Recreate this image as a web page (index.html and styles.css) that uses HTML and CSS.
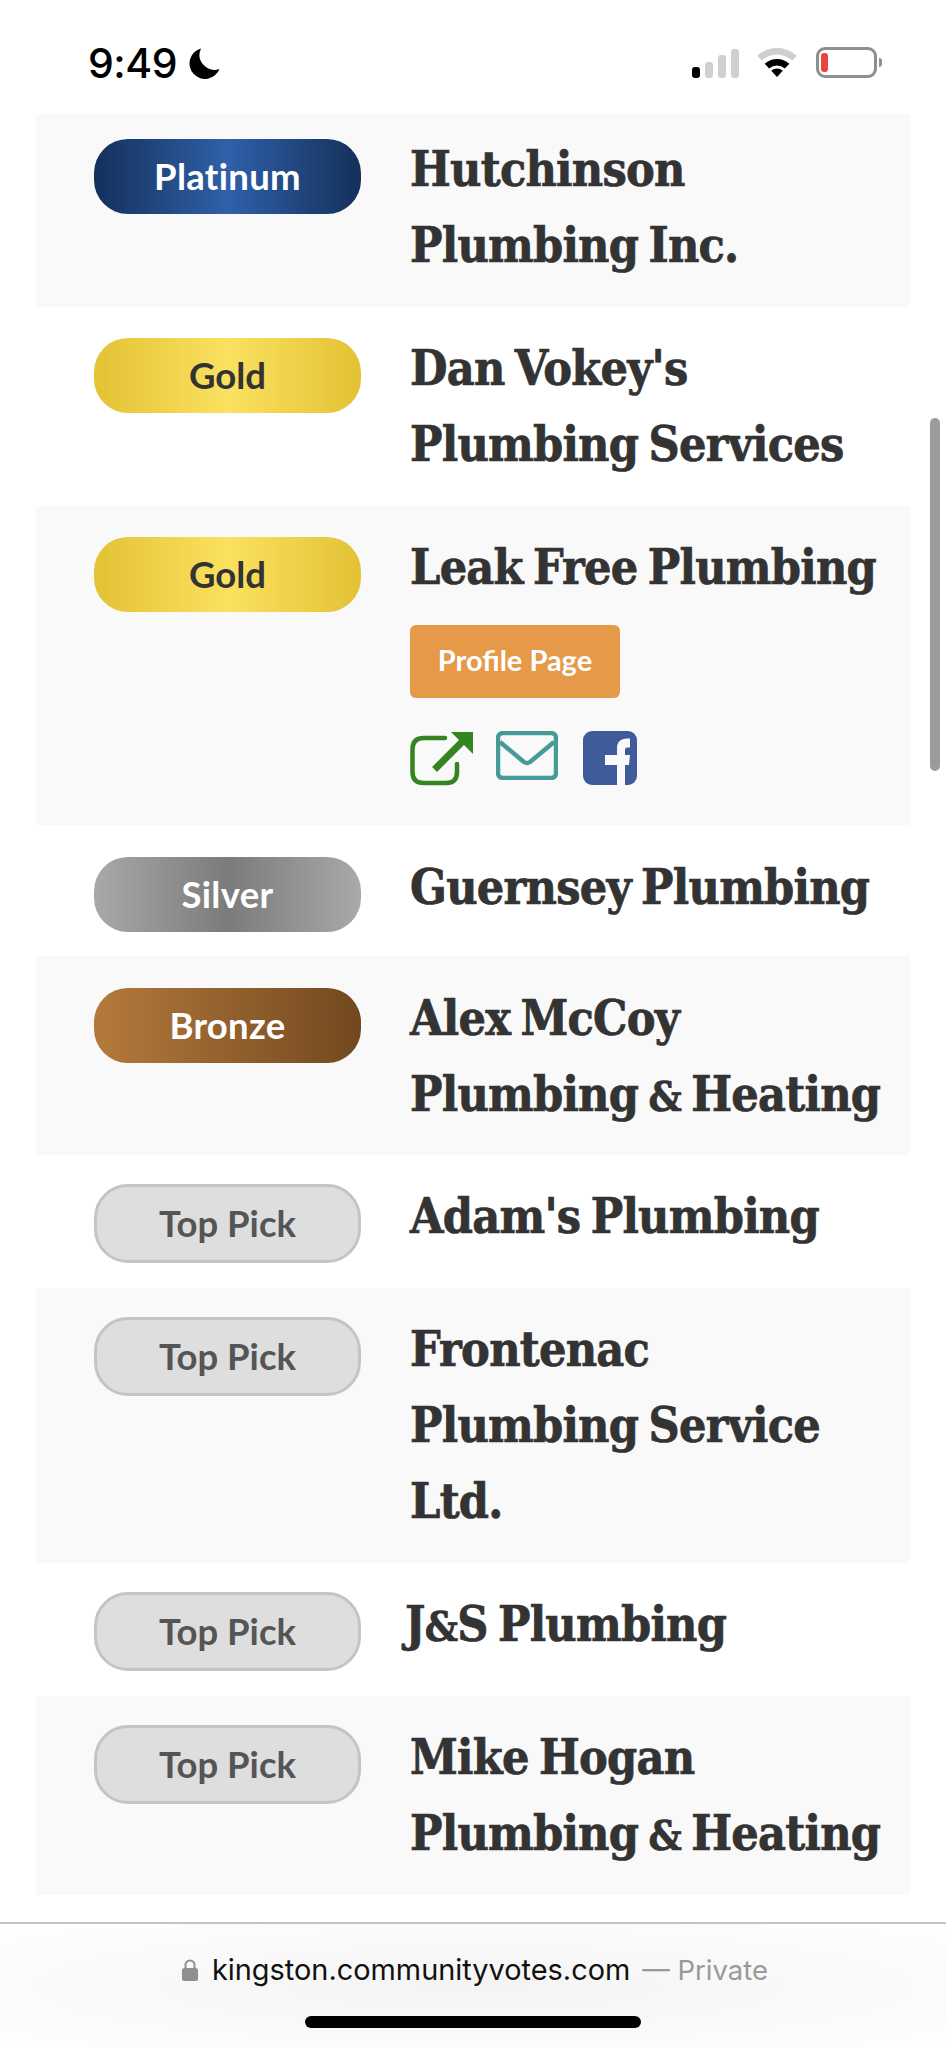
FILE: index.html
```html
<!doctype html>
<html lang="en">
<head>
<meta charset="utf-8">
<title>Plumbing · Kingston Community Votes</title>
<meta name="viewport" content="width=device-width,initial-scale=1">
<link rel="stylesheet" href="styles.css">
</head>
<body>
<div class="phone">
  <div class="status">
    <div class="status-left">
      <span class="clock">9:49</span>
      <svg class="moon" viewBox="0 0 31 31"><path d="M12 .5A15.5 15.5 0 1 0 30.5 21 15 15 0 0 1 12 .5z"/></svg>
    </div>
    <div class="status-right">
      <div class="signal"><i class="on"></i><i></i><i></i><i></i></div>
      <svg class="wifi" viewBox="0 0 40 30">
        <path fill="#cfcfcf" d="M.2 7.8A29 29 0 0 1 39.8 7.8L35.3 12.6A22.5 22.5 0 0 0 4.7 12.6z"/>
        <path d="M7.7 15.8A18 18 0 0 1 32.3 15.8L27.8 20.6A11.5 11.5 0 0 0 12.2 20.6z"/>
        <path d="M14.2 22.8A8.5 8.5 0 0 1 25.8 22.8L20 29z"/>
      </svg>
      <div class="battery"><div class="battery-fill"></div></div>
      <div class="battery-nub"></div>
    </div>
  </div>

  <div class="list">
    <div class="rows">
      <div class="row">
        <div class="badge platinum">Platinum</div>
        <div class="info"><div class="name">Hutchinson<br>Plumbing Inc.</div></div>
      </div>
      <div class="row">
        <div class="badge gold">Gold</div>
        <div class="info"><div class="name">Dan Vokey's<br>Plumbing Services</div></div>
      </div>
      <div class="row">
        <div class="badge gold">Gold</div>
        <div class="info">
          <div class="name">Leak Free Plumbing</div>
          <a class="profile-btn">Profile Page</a>
          <div class="links">
            <svg class="ico-ext" viewBox="0 0 63 55">
              <path fill="none" stroke="#348522" stroke-width="4.5" stroke-linecap="round" d="M35 7H14Q2.500 7 2.500 18V41Q2.500 52 14 52H36Q47 52 47 41V33"/>
              <path fill="none" stroke="#348522" stroke-width="7" stroke-linecap="square" d="M27 36L52 11"/>
              <path fill="#348522" d="M41 1H63V23z"/>
            </svg>
            <svg class="ico-mail" viewBox="0 0 62 49">
              <rect x="2" y="2" width="58" height="45" rx="5" fill="none" stroke="#469b96" stroke-width="4.500"/>
              <path fill="none" stroke="#469b96" stroke-width="4.500" stroke-linejoin="round" d="M4 11L28 31Q31 33 34 31L58 11"/>
            </svg>
            <svg class="ico-fb" viewBox="0 0 54 54">
              <rect width="54" height="54" rx="9" fill="#3f5b99"/>
              <path fill="#f9f9f9" d="M34 54V34H22V24h12v-7c0-6 4-9.500 10-9.500h3v9h-2.500c-2 0-2.500 1-2.500 3V24h5l-1 10h-4V54z"/>
            </svg>
          </div>
        </div>
      </div>
      <div class="row row-low">
        <div class="badge silver">Silver</div>
        <div class="info"><div class="name">Guernsey Plumbing</div></div>
      </div>
      <div class="row row-low">
        <div class="badge bronze">Bronze</div>
        <div class="info"><div class="name">Alex McCoy<br>Plumbing <span class="amp">&amp;</span> Heating</div></div>
      </div>
      <div class="row">
        <div class="badge pick">Top Pick</div>
        <div class="info"><div class="name">Adam's Plumbing</div></div>
      </div>
      <div class="row">
        <div class="badge pick">Top Pick</div>
        <div class="info"><div class="name">Frontenac<br>Plumbing Service<br>Ltd.</div></div>
      </div>
      <div class="row">
        <div class="badge pick">Top Pick</div>
        <div class="info"><div class="name name-j">J<span class="amp">&amp;</span>S Plumbing</div></div>
      </div>
      <div class="row">
        <div class="badge pick">Top Pick</div>
        <div class="info"><div class="name">Mike Hogan<br>Plumbing <span class="amp">&amp;</span> Heating</div></div>
      </div>
    </div>
  </div>

  <div class="urlbar">
    <div class="url">
      <svg class="lock" viewBox="0 0 16 22">
        <path fill="none" stroke="#8e8e93" stroke-width="2" d="M3.500 10V6a4.500 4.500 0 0 1 9 0v4"/>
        <rect y="9" width="16" height="13" rx="2.500" fill="#8e8e93"/>
      </svg>
      <span class="host">kingston.communityvotes.com</span>
      <span class="private">— Private</span>
    </div>
    <div class="home-bar"></div>
  </div>

  <div class="scrollbar"></div>
</div>
</body>
</html>
```

FILE: styles.css
```css
*{box-sizing:border-box;margin:0;padding:0}
body{background:#fff;color:#333;font-family:Lato,"Noto Sans",sans-serif}
.phone{position:relative;width:946px;height:2048px;overflow:hidden}

/* status bar */
.status{height:114px;display:flex;justify-content:space-between;padding:47px 64px 0 88px}
.status-left{display:flex;align-items:flex-start;gap:12px}
.clock{font:500 41px/32px Inter,"Liberation Sans",sans-serif;color:#000;letter-spacing:-.5px}
.moon{width:31px;height:31px;margin-top:1px}
.status-right{display:flex;align-items:flex-start}
.signal{display:flex;align-items:flex-end;gap:5px;height:31px;margin-right:18px}
.signal i{display:block;width:8px;background:#cfcfcf;border-radius:3px}
.signal i:nth-child(1){height:11px}
.signal i:nth-child(2){height:16px}
.signal i:nth-child(3){height:23px}
.signal i:nth-child(4){height:29px}
.signal i.on{background:#000}
.wifi{width:40px;height:30px;margin-top:1px;margin-right:19px}
.battery{width:61px;height:31px;border:3px solid #8f8f8f;border-radius:9px;padding:3px 0 0 2px}
.battery-fill{width:7px;height:19px;background:#e8463c;border-radius:3px}
.battery-nub{width:3px;height:9px;margin:11px 0 0 2px;background:#8f8f8f;border-radius:0 3px 3px 0}

/* list */
.list{height:1808px;overflow:hidden;padding:0 36px}
.rows{margin-top:-6px}
.row{display:flex;align-items:flex-start;padding-left:58px}
.row:nth-child(odd){background:#f9f9f9}
.row-low{padding-top:1px}
.row-low .badge{margin-bottom:24px}
.row-low .info{padding-bottom:23px}
.badge{flex:none;width:267px;height:75px;margin:31px 49px 25px 0;border-radius:34px;font-size:36.500px;font-weight:700;line-height:74px;text-align:center;color:#fff}
.platinum{background:linear-gradient(90deg,#14305a,#2f60a9 50%,#14305a);letter-spacing:.3px}
.gold{background:linear-gradient(90deg,#e3c234,#fbe160 50%,#e3c234);color:#333}
.silver{background:linear-gradient(90deg,#a9a9a9,#7b7b7b 50%,#a9a9a9);letter-spacing:.3px}
.bronze{background:linear-gradient(90deg,#b47a3c,#724820);letter-spacing:.3px}
.pick{height:79px;margin:29px 49px 25px 0;background:#dedede;border:3px solid #c4c4c4;line-height:72px;color:#555}
.info{padding:23px 0 24px}
.name{font:700 48px/76px "DejaVu Serif Condensed","DejaVu Serif",serif;color:#333;white-space:nowrap;letter-spacing:-.75px;word-spacing:-4px;-webkit-text-stroke:.7px #333}
.name-j{margin-left:-5px}
.amp{font-size:41px;line-height:1}
.profile-btn{display:block;width:210px;height:73px;margin-top:20px;background:#e69a49;border-radius:6px;font-size:29px;font-weight:700;line-height:70px;text-align:center;color:#fff}
.links{display:flex;align-items:flex-start;gap:23px;margin-top:33px;padding-bottom:15px}
.ico-ext{width:63px;height:55px}
.ico-mail{width:62px;height:49px}
.ico-fb{width:54px;height:54px;margin-left:2px}

/* safari bottom bar */
.urlbar{height:126px;border-top:2px solid #c4c4c4;background:radial-gradient(ellipse at center,#f4f4f4,#fdfdfd 85%);display:flex;flex-direction:column;align-items:center}
.url{display:flex;align-items:center;height:44px;margin-top:24px;padding-left:4px;font:400 28.900px/44px Inter,"Liberation Sans",sans-serif}
.lock{width:16px;height:22px;margin-right:14px}
.host{color:#111}
.private{margin-left:12px;font-size:27.500px;color:#999}
.home-bar{width:336px;height:12px;margin-top:24px;background:#000;border-radius:6px}

.scrollbar{position:absolute;left:930px;top:418px;width:10px;height:353px;background:#9b9b9b;border-radius:5px}
```
